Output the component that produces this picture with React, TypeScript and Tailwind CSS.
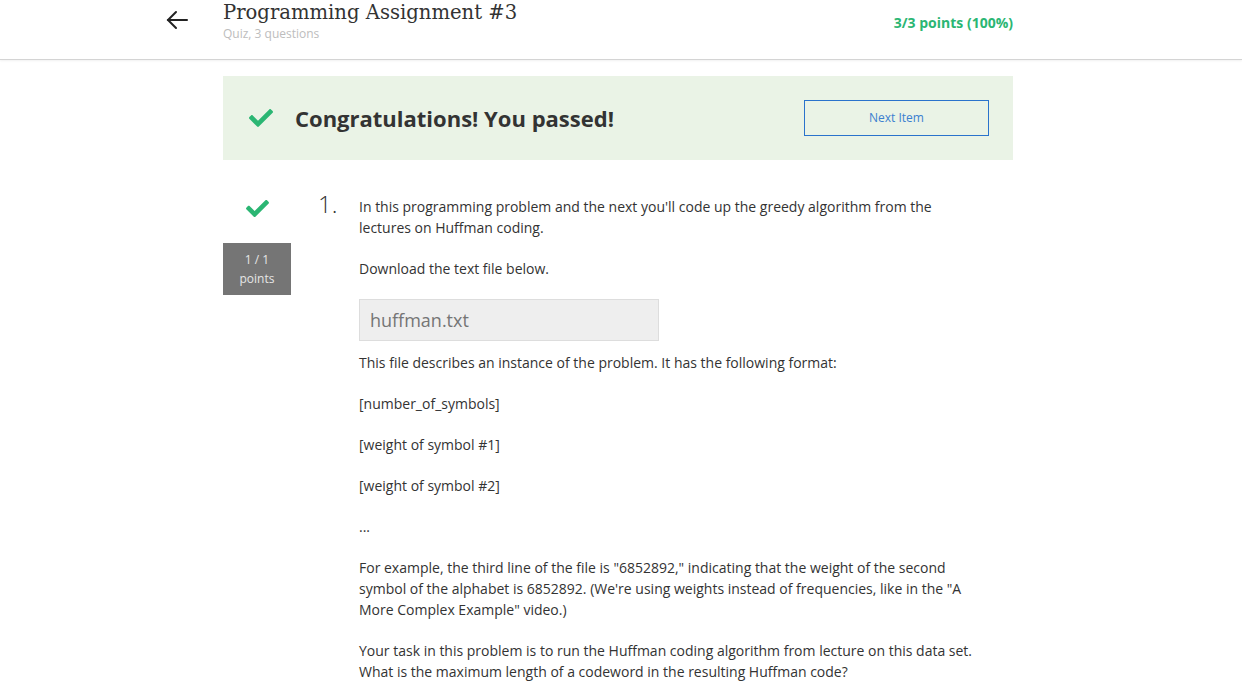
import React from "react";
import { FaCheck } from "react-icons/fa";

const body = "font-['Open_Sans',sans-serif]";

function BackArrow() {
  return (
    <svg width="22" height="20" viewBox="0 0 22 20" fill="none" stroke="#222" strokeWidth="2" strokeLinecap="round">
      <path d="M2 10h19" />
      <path d="M10 2 2 10l8 8" />
    </svg>
  );
}

export default function App() {
  return (
    <main className={`min-h-screen bg-white ${body} text-[#333]`}>
      {/* header */}
      <header className="h-[60px] border-b border-[#d4d4d4] shadow-[0_1px_2px_rgba(0,0,0,0.06)]">
        <div className="flex w-[790px] ml-[223px] relative">
          <div className="absolute left-[-57px] top-[10px]">
            <BackArrow />
          </div>
          <div className="flex-1">
            <h1 className="font-['DejaVu_Serif',serif] text-[19.6px] leading-[26px] text-[#333]">
              Programming Assignment #3
            </h1>
            <div className="text-[12px] leading-[14px] text-[#bdbdbd] mt-[1px]">Quiz, 3 questions</div>
          </div>
          <div className="pt-[12px] text-[14px] font-bold text-[#2bb673]">3/3 points (100%)</div>
        </div>
      </header>

      <div className="w-[790px] ml-[223px]">
        {/* passed banner */}
        <section className="mt-4 h-[84px] bg-[#eaf3e6] flex items-center pl-[26px] pr-[24px]">
          <FaCheck className="text-[#2bb673] w-[24px] h-[24px]" />
          <h2 className="ml-[22px] flex-1 text-[22px] font-bold text-[#333] leading-none">
            Congratulations! You passed!
          </h2>
          <button className="w-[185px] h-[36px] border border-[#2a73cc] text-[12px] text-[#3b80d0] bg-transparent">
            Next Item
          </button>
        </section>

        {/* question 1 */}
        <section className="flex mt-[38px]">
          <div className="w-[68px] flex flex-col items-center">
            <FaCheck className="text-[#2bb673] w-[23px] h-[23px] mt-[-1px]" />
            <div className="mt-[23px] w-[68px] h-[52px] bg-[#757575] text-[#e6e6e6] text-[12px] leading-[19px] flex flex-col items-center justify-center">
              <span>1 / 1</span>
              <span>points</span>
            </div>
          </div>
          <div className="w-[41px] ml-[27px] text-[24px] font-light leading-none mt-[-6px] text-[#333]">1.</div>
          <div className="w-[622px] text-[14px] leading-[21px] mt-[-2px]">
            <p className="mb-5">
              In this programming problem and the next you'll code up the greedy algorithm from the lectures on Huffman coding.
            </p>
            <p className="mb-5">Download the text file below.</p>
            <div className="w-[300px] h-[42px] bg-[#eeeeee] border border-[#dddddd] flex items-center pl-[10px] text-[18px] text-[#757575] mb-[11px]">
              huffman.txt
            </div>
            <p className="mb-5">This file describes an instance of the problem. It has the following format:</p>
            <p className="mb-5">[number_of_symbols]</p>
            <p className="mb-5">[weight of symbol #1]</p>
            <p className="mb-5">[weight of symbol #2]</p>
            <p className="mb-5">...</p>
            <p className="mb-5">
              For example, the third line of the file is "6852892," indicating that the weight of the second symbol of the alphabet is 6852892. (We're using weights instead of frequencies, like in the "A More Complex Example" video.)
            </p>
            <p className="mb-5">
              Your task in this problem is to run the Huffman coding algorithm from lecture on this data set. What is the maximum length of a codeword in the resulting Huffman code?
            </p>
          </div>
        </section>
      </div>
    </main>
  );
}
